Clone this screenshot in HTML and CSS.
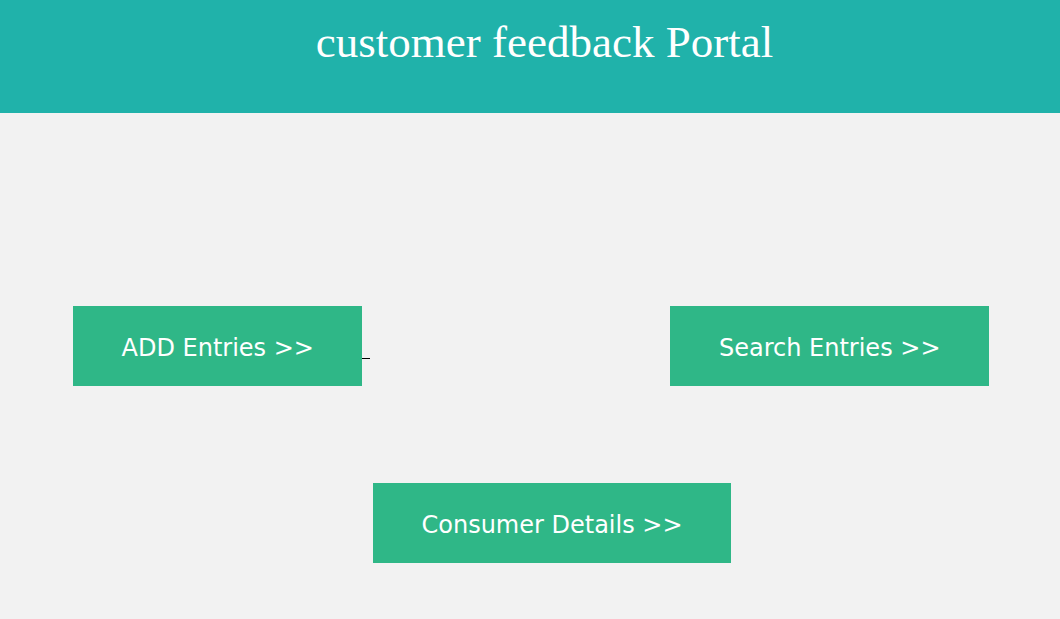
FILE: index.html
```html
<!DOCTYPE html>
<html>
<head>
<meta charset="utf-8">
<title>customer feedback Portal</title>
<link rel="stylesheet" href="styles.css">
</head>
<body>
<header class="header">
  <h1 class="title">customer feedback Portal</h1>
</header>
<main class="main">
  <div class="row row-top">
    <a class="link" href="#"><span class="btn">ADD Entries &gt;&gt;</span><span class="tail"></span></a>
    <a class="link" href="#"><span class="btn">Search Entries &gt;&gt;</span></a>
  </div>
  <div class="row row-bottom">
    <a class="link" href="#"><span class="btn">Consumer Details &gt;&gt;</span></a>
  </div>
</main>
</body>
</html>
```
FILE: styles.css
```css
html, body {
  margin: 0;
  padding: 0;
}
body {
  background: #f2f2f2;
  height: 619px;
  overflow: hidden;
}
.header {
  background: #20b2aa;
  height: 113px;
  box-sizing: border-box;
  padding: 16px 0 0 29px;
}
.title {
  margin: 0;
  text-align: center;
  font-family: "Liberation Serif", "Times New Roman", serif;
  font-weight: normal;
  font-size: 45px;
  line-height: 52px;
  color: #ffffff;
}
.main {
  padding-top: 193px;
}
.row {
  display: flex;
  align-items: flex-start;
}
.row-top {
  justify-content: space-between;
  padding: 0 71px 0 73px;
}
.row-bottom {
  padding: 97px 0 0 373px;
}
.link {
  display: flex;
  align-items: flex-start;
  text-decoration: none;
}
.btn {
  display: block;
  background: #2fb787;
  color: #ffffff;
  font-family: "DejaVu Sans", Verdana, sans-serif;
  font-size: 24px;
  line-height: 28px;
  padding: 28px 48.5px 24px;
  white-space: nowrap;
}
.tail {
  display: block;
  width: 8px;
  height: 1px;
  background: #000000;
  margin-top: 52px;
}
```
